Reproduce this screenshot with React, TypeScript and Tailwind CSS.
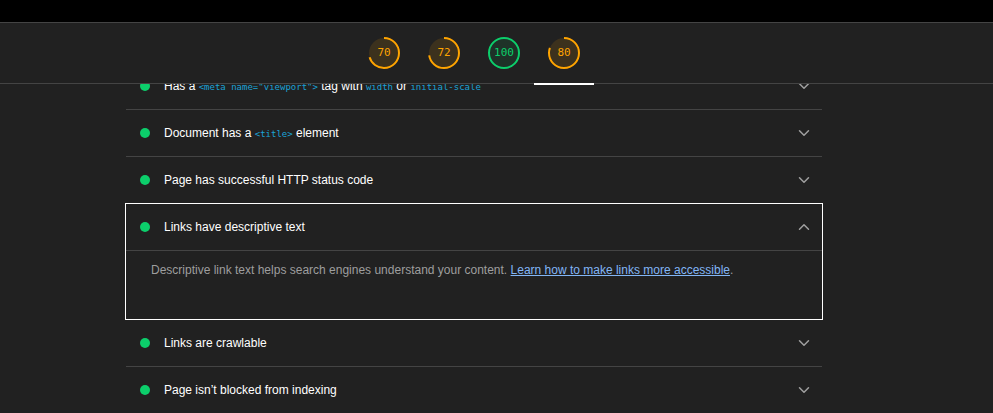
import React from "react";

const sans = { fontFamily: '"Liberation Sans", Arial, sans-serif' };
const mono = { fontFamily: '"DejaVu Sans Mono", "Liberation Mono", monospace' };

function Gauge({ score, active }: { score: number; active?: boolean }) {
  const green = score >= 90;
  const color = green ? "#0cce6b" : "#ffa400";
  const fill = green ? "rgba(12,206,107,0.10)" : "rgba(255,164,0,0.12)";
  const r = 15;
  const c = 2 * Math.PI * r;
  return (
    <div className="relative flex h-[60px] w-[60px] items-center justify-center">
      <div className="relative h-[34px] w-[34px]">
        <svg width="34" height="34" viewBox="0 0 34 34" className="absolute left-0 top-0 -rotate-90">
          <circle cx="17" cy="17" r={r} fill={fill} />
          <circle
            cx="17"
            cy="17"
            r={r}
            fill="none"
            stroke={color}
            strokeWidth="2"
            strokeDasharray={`${(c * score) / 100} ${c}`}
          />
        </svg>
        <div
          className="absolute inset-0 flex items-center justify-center text-[11px]"
          style={{ ...mono, color }}
        >
          {score}
        </div>
      </div>
      {active && <div className="absolute bottom-[-2px] left-0 h-[2px] w-[60px] bg-white" />}
    </div>
  );
}

function Code({ children }: { children: React.ReactNode }) {
  return (
    <code className="text-[9px] text-[#1ba1d6]" style={mono}>
      {children}
    </code>
  );
}

function Chevron({ up }: { up?: boolean }) {
  return (
    <svg width="18" height="18" viewBox="0 0 24 24" fill="none" stroke="#a0a0a0" strokeWidth="2" strokeLinecap="round" strokeLinejoin="round">
      {up ? <path d="M6 15l6-6 6 6" /> : <path d="M6 9l6 6 6-6" />}
    </svg>
  );
}

function Row({ children, up }: { children: React.ReactNode; up?: boolean }) {
  return (
    <div className="flex h-[46px] items-center pl-[14px] pr-[9px]">
      <span className="h-[10px] w-[10px] shrink-0 rounded-full bg-[#0cce6b]" />
      <div className="ml-[14px] flex-1 text-[12px] text-white" style={sans}>
        {children}
      </div>
      <Chevron up={up} />
    </div>
  );
}

export default function App() {
  return (
    <div className="h-[413px] w-[993px] overflow-hidden bg-[#212121]" style={sans}>
      <div className="h-[22px] bg-black" />
      <div className="relative z-10 h-[62px] border-y border-[#444] bg-[#212121]">
        <div className="flex pl-[354px]">
          <Gauge score={70} />
          <Gauge score={72} />
          <Gauge score={100} />
          <Gauge score={80} active />
        </div>
      </div>
      <div className="-mt-[21px] ml-[126px] w-[696px]">
        <div className="border-b border-[#444]">
          <Row>
            Has a <Code>&lt;meta name="viewport"&gt;</Code> tag with <Code>width</Code> or <Code>initial-scale</Code>
          </Row>
        </div>
        <div className="border-b border-[#444]">
          <Row>
            Document has a <Code>&lt;title&gt;</Code> element
          </Row>
        </div>
        <Row>Page has successful HTTP status code</Row>
        <div className="-mx-px border border-white">
          <div className="border-b border-[#444]">
            <Row up>Links have descriptive text</Row>
          </div>
          <div className="h-[68px] pl-[25px] pt-[10px] text-[12px] text-[#9e9e9e]">
            Descriptive link text helps search engines understand your content.{" "}
            <a className="text-[#82b6f6] underline" href="#">
              Learn how to make links more accessible
            </a>
            .
          </div>
        </div>
        <div className="border-b border-[#444]">
          <Row>Links are crawlable</Row>
        </div>
        <Row>Page isn’t blocked from indexing</Row>
      </div>
    </div>
  );
}
